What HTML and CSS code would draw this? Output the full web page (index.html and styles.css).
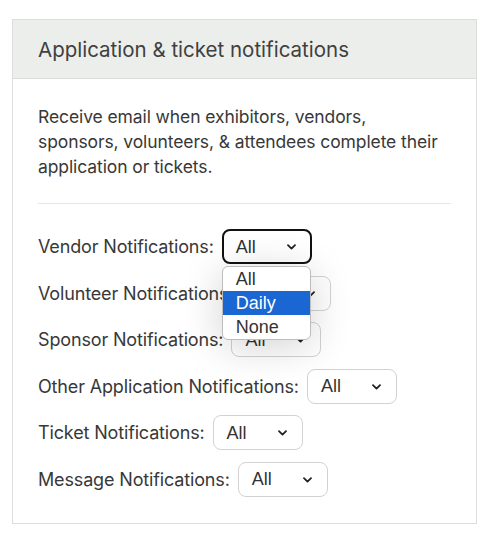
FILE: index.html
```html
<!DOCTYPE html>
<html lang="en">
<head>
<meta charset="utf-8">
<title>Application &amp; ticket notifications</title>
<link rel="stylesheet" href="styles.css">
</head>
<body>
<section class="card">
  <header class="card-header">Application &amp; ticket notifications</header>
  <div class="card-body">
    <p class="intro">Receive email when exhibitors, vendors, sponsors, volunteers, &amp; attendees complete their application or tickets.</p>
    <hr class="divider">
    <div class="rows">
      <div class="row">
        <span class="label">Vendor Notifications:</span>
        <div class="select-wrap">
          <div class="select focused"><span class="value">All</span><svg class="chev" width="9" height="6" viewBox="0 0 9 6"><path d="M1 1.2 L4.5 4.6 L8 1.2" fill="none" stroke="#222" stroke-width="1.8" stroke-linecap="round" stroke-linejoin="round"/></svg></div>
          <ul class="menu">
            <li class="opt">All</li>
            <li class="opt active">Daily</li>
            <li class="opt">None</li>
          </ul>
        </div>
      </div>
      <div class="row">
        <span class="label">Volunteer Notifications:</span>
        <div class="select-wrap">
          <div class="select"><span class="value">All</span><svg class="chev" width="9" height="6" viewBox="0 0 9 6"><path d="M1 1.2 L4.5 4.6 L8 1.2" fill="none" stroke="#222" stroke-width="1.8" stroke-linecap="round" stroke-linejoin="round"/></svg></div>
        </div>
      </div>
      <div class="row">
        <span class="label">Sponsor Notifications:</span>
        <div class="select-wrap">
          <div class="select"><span class="value">All</span><svg class="chev" width="9" height="6" viewBox="0 0 9 6"><path d="M1 1.2 L4.5 4.6 L8 1.2" fill="none" stroke="#222" stroke-width="1.8" stroke-linecap="round" stroke-linejoin="round"/></svg></div>
        </div>
      </div>
      <div class="row">
        <span class="label">Other Application Notifications:</span>
        <div class="select-wrap">
          <div class="select"><span class="value">All</span><svg class="chev" width="9" height="6" viewBox="0 0 9 6"><path d="M1 1.2 L4.5 4.6 L8 1.2" fill="none" stroke="#222" stroke-width="1.8" stroke-linecap="round" stroke-linejoin="round"/></svg></div>
        </div>
      </div>
      <div class="row">
        <span class="label">Ticket Notifications:</span>
        <div class="select-wrap">
          <div class="select"><span class="value">All</span><svg class="chev" width="9" height="6" viewBox="0 0 9 6"><path d="M1 1.2 L4.5 4.6 L8 1.2" fill="none" stroke="#222" stroke-width="1.8" stroke-linecap="round" stroke-linejoin="round"/></svg></div>
        </div>
      </div>
      <div class="row">
        <span class="label">Message Notifications:</span>
        <div class="select-wrap">
          <div class="select"><span class="value">All</span><svg class="chev" width="9" height="6" viewBox="0 0 9 6"><path d="M1 1.2 L4.5 4.6 L8 1.2" fill="none" stroke="#222" stroke-width="1.8" stroke-linecap="round" stroke-linejoin="round"/></svg></div>
        </div>
      </div>
    </div>
  </div>
</section>
</body>
</html>
```
FILE: styles.css
```css
html, body {
  margin: 0;
  padding: 0;
  background: #ffffff;
}
body {
  padding: 19px 14px 0 12px;
  font-family: Inter, "Noto Sans", sans-serif;
  color: #383838;
}
.card {
  width: 465px;
  box-sizing: border-box;
  border: 1px solid #dddddd;
  background: #ffffff;
}
.card-header {
  height: 58px;
  display: flex;
  align-items: center;
  padding: 0 25px;
  background: #eceeeb;
  border-bottom: 1px solid #dcdcdc;
  font-size: 20.5px;
  color: #404040;
}
.card-body {
  padding: 25px 25px 26px 25px;
}
.intro {
  margin: 0;
  font-size: 17.5px;
  line-height: 25px;
  letter-spacing: -0.1px;
}
.divider {
  border: 0;
  border-top: 1px solid #e6e6e6;
  margin: 24px 0 25px 0;
  height: 0;
}
.rows {
  display: flex;
  flex-direction: column;
  gap: 11.6px;
}
.row {
  display: flex;
  align-items: center;
  height: 35px;
}
.label {
  font-size: 18px;
  letter-spacing: -0.15px;
  margin-right: 8px;
}
.select-wrap {
  position: relative;
}
.select {
  box-sizing: border-box;
  width: 90px;
  height: 35px;
  border: 1px solid #d2d2d2;
  border-radius: 8px;
  display: flex;
  align-items: center;
  justify-content: space-between;
  padding: 1px 15px 0 13px;
  font-family: "Liberation Sans", Arial, sans-serif;
  font-size: 18px;
  color: #333333;
  background: #ffffff;
}
.select.focused {
  border: 2px solid #111111;
  padding-left: 12px;
  padding-right: 14px;
}
.chev {
  display: block;
}
.menu {
  position: absolute;
  top: 37px;
  left: 0;
  width: 89px;
  box-sizing: border-box;
  margin: 0;
  padding: 0;
  list-style: none;
  background: #ffffff;
  border: 1px solid #bdbdbd;
  border-radius: 6px;
  overflow: hidden;
  box-shadow: 0 6px 40px rgba(0, 0, 0, 0.18);
  z-index: 5;
}
.opt {
  height: 24px;
  line-height: 24px;
  padding-left: 13px;
  font-family: "Liberation Sans", Arial, sans-serif;
  font-size: 18px;
  color: #333333;
}
.opt.active {
  background: #1a66d2;
  color: #ffffff;
}
```
